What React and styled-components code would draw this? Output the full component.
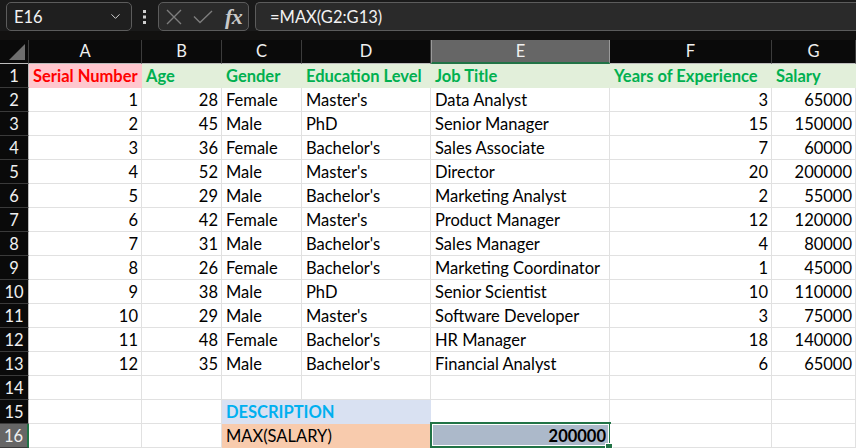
import React from "react";
import styled, { createGlobalStyle } from "styled-components";
import { ChevronDown } from "lucide-react";

const GlobalStyle = createGlobalStyle`
  html, body {
    margin: 0;
    padding: 0;
    background: #ffffff;
    overflow: hidden;
  }
  body {
    font-family: "Lato", "Liberation Sans", sans-serif;
  }
`;

const COLS = "29px 113px 80px 80px 129px 179px 162px 84px";

const Page = styled.div`
  width: 856px;
  height: 448px;
  display: flex;
  flex-direction: column;
  overflow: hidden;
`;

const TopBar = styled.div`
  height: 31px;
  background: #1a1a1a;
  display: flex;
  align-items: center;
  padding: 2px 0 0 6px;
  box-sizing: border-box;
  gap: 6px;
`;

const NameBox = styled.div`
  width: 126px;
  height: 29px;
  box-sizing: border-box;
  border: 1px solid #5c5c5c;
  border-radius: 5px;
  background: #1f1f1f;
  display: flex;
  align-items: center;
  justify-content: space-between;
  padding: 0 8px 0 7px;
  color: #f2f2f2;
  font-size: 16.5px;
`;

const Dots = styled.div`
  width: 14px;
  display: flex;
  justify-content: center;
`;

const ActionBox = styled.div`
  width: 91px;
  height: 29px;
  box-sizing: border-box;
  border: 1px solid #5c5c5c;
  border-radius: 5px;
  background: #2a2a2a;
  display: flex;
  align-items: center;
  padding: 0 0 0 7px;
  gap: 11px;
`;

const Fx = styled.span`
  font-family: "Liberation Serif", serif;
  font-style: italic;
  font-weight: bold;
  font-size: 22px;
  color: #c9c9c9;
  letter-spacing: -0.5px;
  margin-left: 1px;
`;

const FormulaBox = styled.div`
  flex: 1;
  height: 29px;
  box-sizing: border-box;
  border: 1px solid #5c5c5c;
  border-right: none;
  border-radius: 5px 0 0 5px;
  background: #2a2a2a;
  display: flex;
  align-items: center;
  padding-left: 14px;
  color: #f2f2f2;
  font-size: 16.5px;
`;

const Strip = styled.div`
  height: 9px;
  background: #121110;
`;

const Sheet = styled.div`
  display: grid;
  grid-template-columns: ${COLS};
  grid-auto-rows: 24px;
  font-size: 16.5px;
  color: #000;
`;

const Corner = styled.div`
  background: #0a0a0a;
  border-right: 1px solid #3c3c3c;
  border-bottom: 1px solid #bdbdbd;
  box-sizing: border-box;
  display: flex;
  align-items: flex-end;
  justify-content: flex-end;
  padding: 0 3px 3px 0;
`;

const ColHead = styled.div`
  box-sizing: border-box;
  background: ${(p) => (p.$selected ? "#666666" : "#0a0a0a")};
  color: #f0f0f0;
  border-right: 1px solid ${(p) => (p.$selected ? "#9a9a9a" : "#3c3c3c")};
  border-left: ${(p) => (p.$selected ? "1px solid #9a9a9a" : "none")};
  border-bottom: ${(p) =>
    p.$selected ? "2px solid #217346" : "1px solid #bdbdbd"};
  display: flex;
  align-items: center;
  justify-content: center;
  line-height: 1;
`;

const RowHead = styled.div`
  box-sizing: border-box;
  background: ${(p) => (p.$selected ? "#666666" : "#0a0a0a")};
  color: #f0f0f0;
  border-bottom: 1px solid #3a3a3a;
  border-right: ${(p) =>
    p.$selected ? "2px solid #217346" : "1px solid #bdbdbd"};
  display: flex;
  align-items: center;
  justify-content: center;
  padding-top: 1px;
`;

const Cell = styled.div`
  position: relative;
  box-sizing: border-box;
  background: ${(p) => p.$bg || "#ffffff"};
  border-right: 1px solid ${(p) => p.$bg || "#e1e1e1"};
  border-bottom: 1px solid ${(p) => p.$bg || "#e1e1e1"};
  grid-column: ${(p) => (p.$span ? `span ${p.$span}` : "auto")};
  color: ${(p) => p.$color || "#000000"};
  font-weight: ${(p) => (p.$bold ? 700 : 400)};
  display: flex;
  align-items: center;
  justify-content: ${(p) => (p.$right ? "flex-end" : "flex-start")};
  padding: 1px ${(p) => (p.$right ? "3px" : "4px")} 0 4px;
  white-space: nowrap;
  overflow: visible;
`;

const ActiveCell = styled(Cell)`
  &::after {
    content: "";
    position: absolute;
    left: -1px;
    top: -2px;
    right: -2px;
    bottom: -1px;
    border: 2px solid #217346;
    box-shadow: inset 0 0 0 1px #ffffff;
    pointer-events: none;
  }
  &::before {
    content: "";
    position: absolute;
    right: -4px;
    bottom: -4px;
    width: 6px;
    height: 6px;
    background: #217346;
    border: 1px solid #ffffff;
    z-index: 2;
  }
`;

const XIcon = () => (
  <svg width="16" height="16" viewBox="0 0 16 16">
    <path d="M1 1 L15 15 M15 1 L1 15" stroke="#7d7d7d" strokeWidth="1.4" fill="none" />
  </svg>
);

const CheckIcon = () => (
  <svg width="20" height="14" viewBox="0 0 20 14">
    <path d="M1 6.5 L7 12.5 L19 1" stroke="#7d7d7d" strokeWidth="1.4" fill="none" />
  </svg>
);

const DotsIcon = () => (
  <svg width="4" height="14" viewBox="0 0 4 14">
    <rect x="0" y="0" width="3" height="3" fill="#cfcfcf" />
    <rect x="0" y="5.5" width="3" height="3" fill="#cfcfcf" />
    <rect x="0" y="11" width="3" height="3" fill="#cfcfcf" />
  </svg>
);

const CornerIcon = () => (
  <svg width="16" height="16" viewBox="0 0 16 16">
    <polygon points="16,0 16,16 0,16" fill="#6e6e6e" />
  </svg>
);

const HEAD_GREEN = "#e2efda";
const TEXT_GREEN = "#00b050";

const headers = [
  { t: "Serial Number", bg: "#ffc7ce", c: "#ff0000" },
  { t: "Age", bg: HEAD_GREEN, c: TEXT_GREEN },
  { t: "Gender", bg: HEAD_GREEN, c: TEXT_GREEN },
  { t: "Education Level", bg: HEAD_GREEN, c: TEXT_GREEN },
  { t: "Job Title", bg: HEAD_GREEN, c: TEXT_GREEN },
  { t: "Years of Experience", bg: HEAD_GREEN, c: TEXT_GREEN },
  { t: "Salary", bg: HEAD_GREEN, c: TEXT_GREEN },
];

const data = [
  [1, 28, "Female", "Master's", "Data Analyst", 3, 65000],
  [2, 45, "Male", "PhD", "Senior Manager", 15, 150000],
  [3, 36, "Female", "Bachelor's", "Sales Associate", 7, 60000],
  [4, 52, "Male", "Master's", "Director", 20, 200000],
  [5, 29, "Male", "Bachelor's", "Marketing Analyst", 2, 55000],
  [6, 42, "Female", "Master's", "Product Manager", 12, 120000],
  [7, 31, "Male", "Bachelor's", "Sales Manager", 4, 80000],
  [8, 26, "Female", "Bachelor's", "Marketing Coordinator", 1, 45000],
  [9, 38, "Male", "PhD", "Senior Scientist", 10, 110000],
  [10, 29, "Male", "Master's", "Software Developer", 3, 75000],
  [11, 48, "Female", "Bachelor's", "HR Manager", 18, 140000],
  [12, 35, "Male", "Bachelor's", "Financial Analyst", 6, 65000],
];

const letters = ["A", "B", "C", "D", "E", "F", "G"];

export default function App() {
  return (
    <Page>
      <GlobalStyle />
      <TopBar>
        <NameBox>
          <span>E16</span>
          <ChevronDown size={15} color="#d0d0d0" strokeWidth={1.6} />
        </NameBox>
        <Dots>
          <DotsIcon />
        </Dots>
        <ActionBox>
          <XIcon />
          <CheckIcon />
          <Fx>fx</Fx>
        </ActionBox>
        <FormulaBox>=MAX(G2:G13)</FormulaBox>
      </TopBar>
      <Strip />
      <Sheet>
        <Corner>
          <CornerIcon />
        </Corner>
        {letters.map((l) => (
          <ColHead key={l} $selected={l === "E"}>
            {l}
          </ColHead>
        ))}

        <RowHead>1</RowHead>
        {headers.map((h) => (
          <Cell key={h.t} $bg={h.bg} $color={h.c} $bold>
            {h.t}
          </Cell>
        ))}

        {data.map((row, i) => (
          <React.Fragment key={i}>
            <RowHead>{i + 2}</RowHead>
            {row.map((v, j) => (
              <Cell key={j} $right={typeof v === "number"}>
                {v}
              </Cell>
            ))}
          </React.Fragment>
        ))}

        <RowHead>14</RowHead>
        {letters.map((l) => (
          <Cell key={l} />
        ))}

        <RowHead>15</RowHead>
        <Cell />
        <Cell />
        <Cell $span={2} $bg="#d9e1f2" $color="#00b0f0" $bold>
          DESCRIPTION
        </Cell>
        <Cell />
        <Cell />
        <Cell />

        <RowHead $selected>16</RowHead>
        <Cell />
        <Cell />
        <Cell $span={2} $bg="#f8cbad">
          MAX(SALARY)
        </Cell>
        <ActiveCell $bg="#acb9ca" $right $bold>
          200000
        </ActiveCell>
        <Cell />
        <Cell />
      </Sheet>
    </Page>
  );
}
